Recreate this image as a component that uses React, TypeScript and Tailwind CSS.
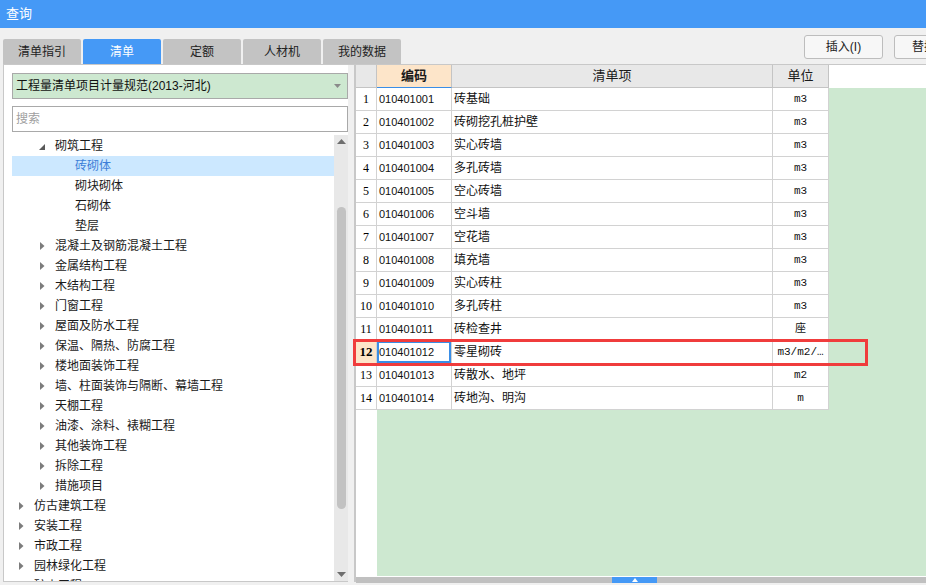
import React from 'react';

const CJK = { fontFamily: '"Liberation Sans", "Noto Sans CJK SC", sans-serif' };

type Node = { label: string; level: number; state: 'open' | 'closed' | 'leaf'; selected?: boolean };

const tree: Node[] = [
  { label: '砌筑工程', level: 1, state: 'open' },
  { label: '砖砌体', level: 2, state: 'leaf', selected: true },
  { label: '砌块砌体', level: 2, state: 'leaf' },
  { label: '石砌体', level: 2, state: 'leaf' },
  { label: '垫层', level: 2, state: 'leaf' },
  { label: '混凝土及钢筋混凝土工程', level: 1, state: 'closed' },
  { label: '金属结构工程', level: 1, state: 'closed' },
  { label: '木结构工程', level: 1, state: 'closed' },
  { label: '门窗工程', level: 1, state: 'closed' },
  { label: '屋面及防水工程', level: 1, state: 'closed' },
  { label: '保温、隔热、防腐工程', level: 1, state: 'closed' },
  { label: '楼地面装饰工程', level: 1, state: 'closed' },
  { label: '墙、柱面装饰与隔断、幕墙工程', level: 1, state: 'closed' },
  { label: '天棚工程', level: 1, state: 'closed' },
  { label: '油漆、涂料、裱糊工程', level: 1, state: 'closed' },
  { label: '其他装饰工程', level: 1, state: 'closed' },
  { label: '拆除工程', level: 1, state: 'closed' },
  { label: '措施项目', level: 1, state: 'closed' },
  { label: '仿古建筑工程', level: 0, state: 'closed' },
  { label: '安装工程', level: 0, state: 'closed' },
  { label: '市政工程', level: 0, state: 'closed' },
  { label: '园林绿化工程', level: 0, state: 'closed' },
  { label: '矿山工程', level: 0, state: 'closed' },
];

const rows = [
  ['010401001', '砖基础', 'm3'],
  ['010401002', '砖砌挖孔桩护壁', 'm3'],
  ['010401003', '实心砖墙', 'm3'],
  ['010401004', '多孔砖墙', 'm3'],
  ['010401005', '空心砖墙', 'm3'],
  ['010401006', '空斗墙', 'm3'],
  ['010401007', '空花墙', 'm3'],
  ['010401008', '填充墙', 'm3'],
  ['010401009', '实心砖柱', 'm3'],
  ['010401010', '多孔砖柱', 'm3'],
  ['010401011', '砖检查井', '座'],
  ['010401012', '零星砌砖', 'm3/m2/…'],
  ['010401013', '砖散水、地坪', 'm2'],
  ['010401014', '砖地沟、明沟', 'm'],
];

const tabs = ['清单指引', '清单', '定额', '人材机', '我的数据'];

const indent: Record<number, string> = { 0: 'pl-[6px]', 1: 'pl-[27px]', 2: 'pl-[47px]' };

const Arrow = ({ state }: { state: Node['state'] }) => {
  if (state === 'open')
    return (
      <svg width="7" height="7" viewBox="0 0 7 7" className="mr-[9px] mt-[2px]">
        <polygon points="6,0 6,6 0,6" fill="#595959" />
      </svg>
    );
  if (state === 'closed')
    return (
      <svg width="5" height="8" viewBox="0 0 5 8" className="ml-[1px] mr-[10px]">
        <polygon points="0,0 4.5,4 0,8" fill="#7c7c7c" />
      </svg>
    );
  return <span className="w-[16px]" />;
};

export default function App() {
  return (
    <div className="w-[926px] h-[585px] bg-[#f0f0f0] overflow-hidden flex flex-col" style={CJK}>
      <div className="h-[28px] bg-[#4599f6] flex items-center px-[6px] text-white text-[13px] shrink-0">查询</div>

      <div className="h-[36px] flex shrink-0">
        <div className="flex items-end gap-[2px] pl-[3px]">
          {tabs.map((t, i) => (
            <div
              key={t}
              className={`w-[78px] h-[25px] rounded-t-[2px] flex items-center justify-center text-[12px] ${
                i === 1 ? 'bg-[#4599f6] text-white' : 'bg-[#c3c3c3] text-[#222]'
              }`}
            >
              {t}
            </div>
          ))}
        </div>
        <div className="flex-1" />
        <div className="flex gap-[11px] pt-[7px] -mr-[40px]">
          <div className="w-[79px] h-[24px] bg-[#f7f7f7] border border-[#bdbdbd] rounded-[3px] flex items-center justify-center text-[12px] text-[#222]">
            插入(I)
          </div>
          <div className="w-[72px] h-[24px] bg-[#f7f7f7] border border-[#bdbdbd] rounded-[3px] flex items-center pl-[17px] text-[12px] text-[#222]">
            替换
          </div>
        </div>
      </div>

      <div className="h-[518px] flex border-t border-[#c8c8c8] ml-[3px] shrink-0">
        {/* left panel */}
        <div className="w-[345px] bg-white border-l border-b border-[#c8c8c8] flex flex-col">
          <div className="ml-[8px] mt-[8px] w-[336px] h-[26px] bg-[#cde8d0] border border-[#a9a9a9] flex items-center pl-[3px] pr-[6px] text-[12px] text-[#111]">
            <span className="flex-1">工程量清单项目计量规范(2013-河北)</span>
            <svg width="7" height="4" viewBox="0 0 7 4">
              <polygon points="0,0 7,0 3.5,4" fill="#8a8a8a" />
            </svg>
          </div>
          <div className="ml-[8px] mt-[7px] w-[336px] h-[26px] bg-white border border-[#a9a9a9] flex items-center pl-[3px] text-[12px] text-[#a0a0a0]">
            搜索
          </div>
          <div className="flex flex-1 mt-[3px] ml-[8px] overflow-hidden">
            <div className="w-[322px] overflow-hidden pt-[1px]">
              {tree.map((n) => (
                <div
                  key={n.label}
                  className={`h-[20px] flex items-center text-[12px] ${indent[n.level]} ${
                    n.selected ? 'bg-[#cce8ff] text-[#3d7fd8]' : 'text-[#1a1a1a]'
                  }`}
                >
                  <Arrow state={n.state} />
                  <span>{n.label}</span>
                </div>
              ))}
            </div>
            <div className="w-[14px] bg-[#e8e8e8] flex flex-col items-center">
              <svg width="9" height="5" viewBox="0 0 9 5" className="mt-[4px]">
                <polygon points="0,5 9,5 4.5,0" fill="#6e6e6e" />
              </svg>
              <div className="w-[9px] h-[302px] mt-[63px] rounded-full bg-[#c2c2c2]" />
              <div className="flex-1" />
              <svg width="9" height="5" viewBox="0 0 9 5" className="mb-[4px]">
                <polygon points="0,0 9,0 4.5,5" fill="#6e6e6e" />
              </svg>
            </div>
          </div>
        </div>

        <div className="w-[6px]" />

        {/* right panel */}
        <div className="flex-1 relative border-l-2 border-[#c8c8c8] flex flex-col bg-white">
          <div className="h-[23px] flex text-[13px] text-[#1a1a1a] shrink-0">
            <div className="w-[21px] bg-[#e8e8e8] border-r border-b border-[#c4c4c4]" />
            <div className="w-[75px] bg-[#fde5c9] border-r border-[#c4c4c4] border-b border-b-[#3a8ee6] flex items-center justify-center font-bold">
              编码
            </div>
            <div className="w-[321px] bg-[#e8e8e8] border-r border-b border-[#c4c4c4] flex items-center justify-center">
              清单项
            </div>
            <div className="w-[56px] bg-[#e8e8e8] border-r border-b border-[#c4c4c4] flex items-center justify-center">
              单位
            </div>
            <div className="flex-1 bg-white" />
          </div>

          <div className="flex h-[488px] shrink-0">
            <div className="w-[21px] bg-white">
              {rows.map((r, i) => (
                <div
                  key={r[0]}
                  className={`h-[23px] border-r border-b border-[#d2d2d2] flex items-center justify-center ${
                    i === 11 ? 'bg-[#fde5c9] font-bold text-[13px]' : 'text-[12px]'
                  }`}
                  style={{ fontFamily: '"Liberation Serif", serif' }}
                >
                  {i + 1}
                </div>
              ))}
            </div>
            <div className="flex-1 bg-[#cde8d0]">
              {rows.map((r, i) => (
                <div key={r[0]} className="h-[23px] flex text-[12px] text-[#111]">
                  <div
                    className={`w-[75px] bg-white border-r border-b border-[#d2d2d2] flex items-center pl-[2px] text-[11px] ${
                      i === 11 ? 'shadow-[inset_0_0_0_2px_#3a8ee6]' : ''
                    }`}
                  >
                    {r[0]}
                  </div>
                  <div className="w-[321px] bg-white border-r border-b border-[#d2d2d2] flex items-center pl-[2px]">
                    {r[1]}
                  </div>
                  <div
                    className="w-[56px] bg-white border-r border-b border-[#d2d2d2] flex items-center justify-center text-[11px] whitespace-nowrap overflow-hidden"
                    style={{ fontFamily: '"Liberation Mono", "Noto Sans CJK SC", monospace' }}
                  >
                    {r[2]}
                  </div>
                </div>
              ))}
            </div>
          </div>

          <div className="h-[6px] mt-[1px] bg-[#c0c0c0] flex shrink-0">
            <div className="w-[256px]" />
            <div className="w-[45px] bg-[#4599f6] flex items-center justify-center">
              <svg width="6" height="4" viewBox="0 0 6 4">
                <polygon points="0,4 6,4 3,0" fill="#fff" />
              </svg>
            </div>
          </div>

          <div className="absolute left-[-3px] top-[274px] w-[515px] h-[27px] border-[3px] border-[#f03c3c] pointer-events-none" />
        </div>
      </div>
    </div>
  );
}
